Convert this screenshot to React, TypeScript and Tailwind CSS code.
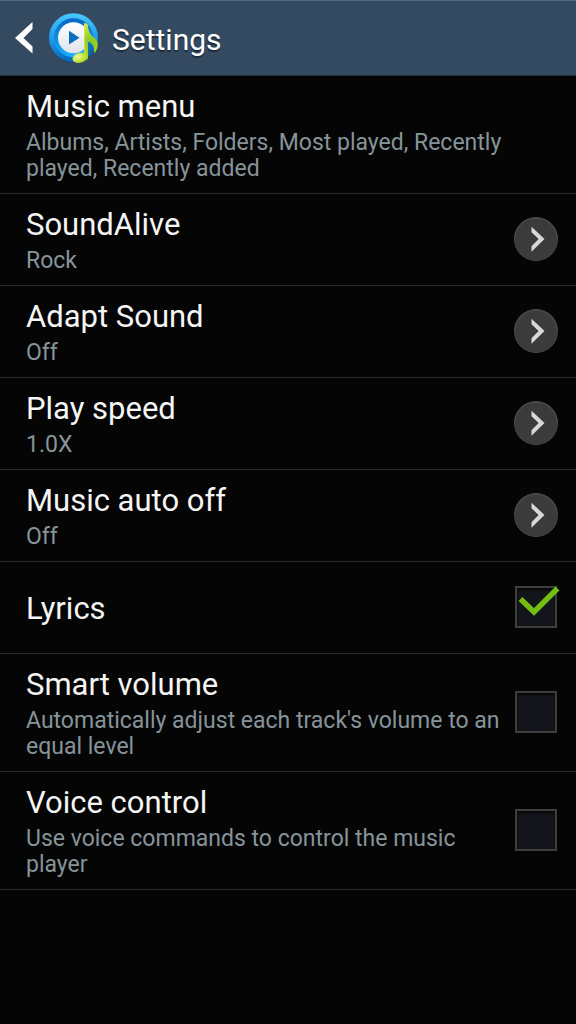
import React, { useState } from "react";

type Item = {
  id: string;
  title: string;
  summary?: string;
  kind: "plain" | "link" | "check";
};

const items: Item[] = [
  {
    id: "menu",
    title: "Music menu",
    summary:
      "Albums, Artists, Folders, Most played, Recently played, Recently added",
    kind: "plain",
  },
  { id: "soundalive", title: "SoundAlive", summary: "Rock", kind: "link" },
  { id: "adapt", title: "Adapt Sound", summary: "Off", kind: "link" },
  { id: "speed", title: "Play speed", summary: "1.0X", kind: "link" },
  { id: "autooff", title: "Music auto off", summary: "Off", kind: "link" },
  { id: "lyrics", title: "Lyrics", kind: "check" },
  {
    id: "volume",
    title: "Smart volume",
    summary: "Automatically adjust each track's volume to an equal level",
    kind: "check",
  },
  {
    id: "voice",
    title: "Voice control",
    summary: "Use voice commands to control the music player",
    kind: "check",
  },
];

const MusicIcon: React.FC = () => (
  <svg className="size-[52px]" viewBox="0 0 52 52" aria-hidden="true">
    <defs>
      <linearGradient id="ring" x1="0" y1="0" x2="0" y2="1">
        <stop offset="0" stopColor="#49c8fb" />
        <stop offset="0.5" stopColor="#1f9cec" />
        <stop offset="1" stopColor="#0a65b8" />
      </linearGradient>
      <linearGradient id="inner" x1="0" y1="0" x2="0" y2="1">
        <stop offset="0" stopColor="#0866c0" />
        <stop offset="1" stopColor="#16b0ff" />
      </linearGradient>
      <linearGradient id="disc" x1="0" y1="0" x2="0" y2="1">
        <stop offset="0" stopColor="#ffffff" />
        <stop offset="1" stopColor="#dfe3e8" />
      </linearGradient>
      <linearGradient id="note" x1="0" y1="0" x2="0" y2="1">
        <stop offset="0" stopColor="#d9e94a" />
        <stop offset="0.45" stopColor="#8fcb22" />
        <stop offset="1" stopColor="#b5dd1c" />
      </linearGradient>
      <radialGradient id="head" cx="0.35" cy="0.35" r="0.7">
        <stop offset="0" stopColor="#f2f9a0" />
        <stop offset="1" stopColor="#a9d814" />
      </radialGradient>
    </defs>
    <circle cx="25.5" cy="26.5" r="24.5" fill="#1c3a58" opacity="0.6" />
    <circle cx="25.5" cy="25.7" r="24.5" fill="url(#ring)" />
    <circle cx="25.5" cy="25.7" r="19.5" fill="url(#inner)" />
    <circle cx="25.5" cy="25.7" r="15.5" fill="url(#disc)" />
    <path d="M21 18.8 31.5 25.7 21 32.4Z" fill="#0b6fc0" />
    <path
      d="M39 29c4 2 6 5 7 9-1 4-4 7-7 9Z"
      fill="#08539c"
      opacity="0.6"
    />
    <path
      d="M36 11c1.7.2 3.3.8 3.9 2 .3 3.500.8 6.500 2.600 9.200 1.700 2.500 4 3.300 5.700 5.600 2.800 4 1.600 8.600-1.200 12.700-.4.600-1 .3-.9-.3.9-5-1.300-9-6-11.500V45c0 2-1.100 3.200-4.100 3.500Z"
      fill="url(#note)"
    />
    <path d="M36.8 12v31" stroke="#e6f27a" strokeWidth="1" opacity="0.7" />
    <ellipse
      cx="32"
      cy="45.8"
      rx="7.6"
      ry="4.9"
      transform="rotate(-15 32 45.8)"
      fill="url(#head)"
    />
  </svg>
);

const Chevron: React.FC = () => (
  <svg
    className="size-[44px] shrink-0"
    viewBox="0 0 44 44"
    aria-hidden="true"
  >
    <circle cx="22" cy="22" r="22" fill="#4c4c4c" />
    <circle cx="22" cy="22.5" r="21" fill="#3b3b3b" />
    <path
      d="M17.5 9.7v5.6L24.6 22l-7.1 7.2v5.5L30.5 22Z"
      fill="#d8d8d8"
    />
  </svg>
);

const Labels: React.FC<{ item: Item }> = ({ item }) => (
  <span className="min-w-0 flex-1 pt-[3px]">
    <span className="block text-[31px] leading-9 text-[#f5f5f5]">
      {item.title}
    </span>
    {item.summary && (
      <span className="mt-[5px] block text-[23px] leading-[26px] text-[#86949a]">
        {item.summary}
      </span>
    )}
  </span>
);

const rowClass =
  "flex min-h-[92px] w-full items-center gap-3 border-b border-[#2a2a2a] pt-[10px] pb-[11px] pl-[26px] pr-[18px] text-left";

const App: React.FC = () => {
  const [checked, setChecked] = useState<Record<string, boolean>>({
    lyrics: true,
  });

  return (
    <div className="min-h-screen bg-[#050505] font-[Roboto,sans-serif]">
      <header className="flex h-[76px] items-center border-t border-b border-t-[#4d6f8c] border-b-[#22303d] bg-[#344a61] pl-3.5">
        <button type="button" aria-label="Back" className="mr-3.5">
          <svg className="h-8 w-5" viewBox="0 0 20 32" aria-hidden="true">
            <path d="M18.5 0v7L9.5 16l9 8.5v7L1 16Z" fill="#fff" />
          </svg>
        </button>
        <MusicIcon />
        <h1 className="ml-3 pt-1 text-[30px] leading-9 text-white text-shadow-[0_2px_1px_#1c2a38]">
          Settings
        </h1>
      </header>

      <ul>
        {items.map((item) => (
          <li key={item.id}>
            {item.kind === "check" ? (
              <label htmlFor={item.id} className={rowClass}>
                <Labels item={item} />
                <span className="relative mr-px size-[42px] shrink-0">
                  <input
                    id={item.id}
                    type="checkbox"
                    checked={!!checked[item.id]}
                    onChange={(e) =>
                      setChecked({ ...checked, [item.id]: e.target.checked })
                    }
                    className="block size-full appearance-none border-2 border-[#3e3e3e] bg-[#14151a] shadow-[inset_0_2px_2px_#08080a]"
                  />
                  {checked[item.id] && (
                    <svg
                      className="pointer-events-none absolute inset-0 size-full overflow-visible"
                      viewBox="0 0 42 42"
                      aria-hidden="true"
                    >
                      <path
                        d="M5.5 13 19 26 42.5 2.5"
                        fill="none"
                        stroke="#74bd12"
                        strokeWidth="5.5"
                      />
                    </svg>
                  )}
                </span>
              </label>
            ) : (
              <button type="button" className={rowClass}>
                <Labels item={item} />
                {item.kind === "link" && <Chevron />}
              </button>
            )}
          </li>
        ))}
      </ul>
    </div>
  );
};

export default App;
